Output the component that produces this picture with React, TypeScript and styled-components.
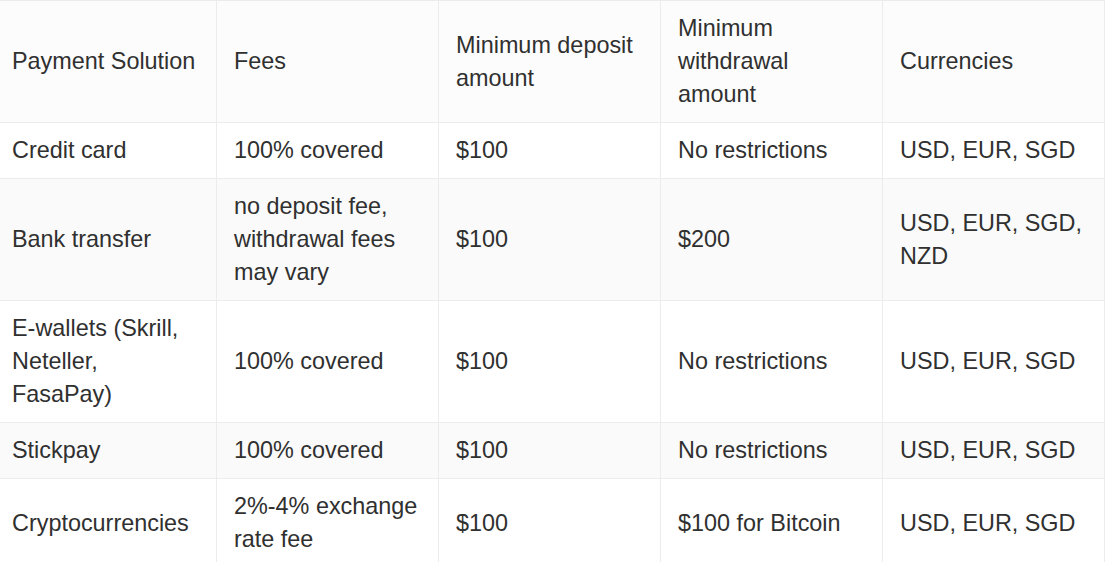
import React from 'react'
import styled, { createGlobalStyle } from 'styled-components'

const GlobalStyle = createGlobalStyle`
  html, body {
    margin: 0;
    padding: 0;
    background: #ffffff;
  }
  body {
    font-family: "Liberation Sans", Arial, Helvetica, sans-serif;
    overflow: hidden;
  }
`

type Row = {
  solution: string
  fees: string
  deposit: string
  withdrawal: string
  currencies: string
}

const headers = [
  'Payment Solution',
  'Fees',
  'Minimum deposit amount',
  'Minimum withdrawal amount',
  'Currencies',
]

const rows: Row[] = [
  {
    solution: 'Credit card',
    fees: '100% covered',
    deposit: '$100',
    withdrawal: 'No restrictions',
    currencies: 'USD, EUR, SGD',
  },
  {
    solution: 'Bank transfer',
    fees: 'no deposit fee, withdrawal fees may vary',
    deposit: '$100',
    withdrawal: '$200',
    currencies: 'USD, EUR, SGD, NZD',
  },
  {
    solution: 'E-wallets (Skrill, Neteller, FasaPay)',
    fees: '100% covered',
    deposit: '$100',
    withdrawal: 'No restrictions',
    currencies: 'USD, EUR, SGD',
  },
  {
    solution: 'Stickpay',
    fees: '100% covered',
    deposit: '$100',
    withdrawal: 'No restrictions',
    currencies: 'USD, EUR, SGD',
  },
  {
    solution: 'Cryptocurrencies',
    fees: '2%-4% exchange rate fee',
    deposit: '$100',
    withdrawal: '$100 for Bitcoin',
    currencies: 'USD, EUR, SGD',
  },
]

const Wrapper = styled.div`
  width: 1107px;
  overflow: hidden;
`

const Table = styled.table`
  width: 1111px;
  margin-left: -6px;
  table-layout: fixed;
  border-collapse: collapse;
  color: #303030;
  font-size: 23.4px;
  line-height: 33px;
`

const HeadRow = styled.tr`
  background: #fcfcfc;
`

const BodyRow = styled.tr<{ $striped: boolean }>`
  background: ${({ $striped }) => ($striped ? '#fafafa' : '#ffffff')};
`

const HeadCell = styled.th`
  font-weight: 400;
  text-align: left;
  vertical-align: middle;
  padding: 11px 17px;
  border: 1px solid #ececec;
`

const Cell = styled.td`
  text-align: left;
  vertical-align: middle;
  padding: 11px 17px;
  border: 1px solid #ececec;
`

export default function App() {
  return (
    <Wrapper>
      <GlobalStyle />
      <Table>
        <thead>
          <HeadRow>
            {headers.map((h) => (
              <HeadCell key={h}>{h}</HeadCell>
            ))}
          </HeadRow>
        </thead>
        <tbody>
          {rows.map((r, i) => (
            <BodyRow key={r.solution} $striped={i % 2 === 1}>
              <Cell>{r.solution}</Cell>
              <Cell>{r.fees}</Cell>
              <Cell>{r.deposit}</Cell>
              <Cell>{r.withdrawal}</Cell>
              <Cell>{r.currencies}</Cell>
            </BodyRow>
          ))}
        </tbody>
      </Table>
    </Wrapper>
  )
}
